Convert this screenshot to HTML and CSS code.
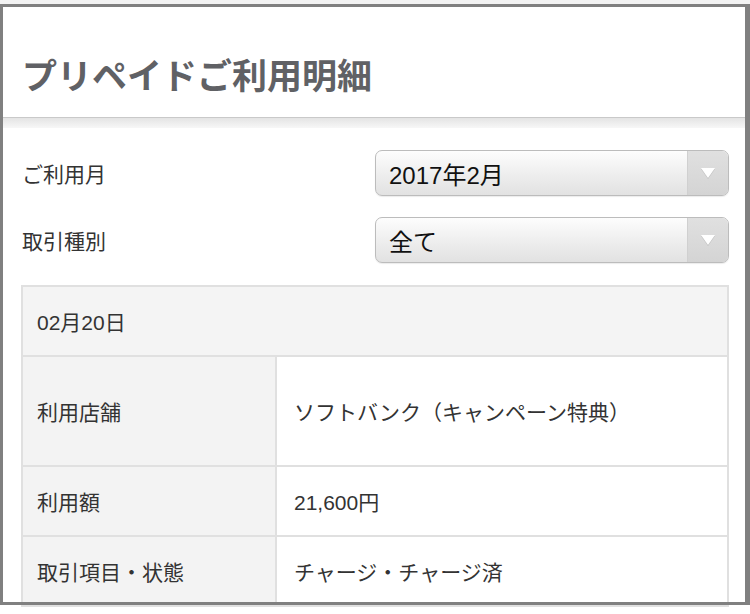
FILE: index.html
```html
<!DOCTYPE html>
<html lang="ja">
<head>
  <meta charset="UTF-8">
  <title>プリペイドご利用明細</title>
  <meta name="viewport" content="width=device-width, initial-scale=1.0">
  <link rel="stylesheet" href="styles.css">
</head>
<body>
  <div class="top-strip"></div>
  <div class="page-header">
    <h1 class="page-title">プリペイドご利用明細</h1>
  </div>
  <div class="header-rule"></div>

  <div class="filters">
    <div class="filter-row">
      <div class="filter-label">ご利用月</div>
      <div class="select-box">
        <span class="select-value">2017年2月</span>
        <span class="select-arrow"><span class="arrow-tri"></span></span>
      </div>
    </div>
    <div class="filter-row">
      <div class="filter-label">取引種別</div>
      <div class="select-box">
        <span class="select-value">全て</span>
        <span class="select-arrow"><span class="arrow-tri"></span></span>
      </div>
    </div>
  </div>

  <table class="detail-table">
    <colgroup>
      <col class="col-label">
      <col class="col-value">
    </colgroup>
    <tr class="date-row">
      <td colspan="2">02月20日</td>
    </tr>
    <tr class="tall-row">
      <th>利用店舗</th>
      <td>ソフトバンク（キャンペーン特典）</td>
    </tr>
    <tr>
      <th>利用額</th>
      <td>21,600円</td>
    </tr>
    <tr>
      <th>取引項目・状態</th>
      <td>チャージ・チャージ済</td>
    </tr>
  </table>

  <!-- outline drawn round the captured area -->
  <div class="capture-frame"></div>
</body>
</html>
```

FILE: styles.css
```css
body {
  margin: 0;
  padding: 0;
  background: #fff;
  font-family: 'Liberation Sans', 'Noto Sans CJK JP', sans-serif;
  color: #333;
  overflow: hidden;
}
.top-strip {
  height: 4px;
  background: #f3f3f3;
}
.page-header {
  padding: 52px 22px 19px 22px;
}
.page-title {
  margin: 0;
  font-size: 35px;
  line-height: 42px;
  font-weight: 600;
  color: #606165;
  letter-spacing: 0;
}
.header-rule {
  height: 10px;
  border-top: 1px solid #c9c9c9;
  background: linear-gradient(#e4e4e4, #f7f7f7);
}
.filters {
  padding: 22px 21px 0 22px;
}
.filter-row {
  display: flex;
  align-items: center;
  margin-bottom: 21px;
}
.filter-row:last-child {
  margin-bottom: 22px;
}
.filter-label {
  flex: 1;
  font-size: 21px;
  color: #333;
}
.select-box {
  width: 354px;
  height: 46px;
  box-sizing: border-box;
  border: 1px solid #bcbcbc;
  border-radius: 7px;
  background: linear-gradient(#fdfdfd, #ececec 60%, #e2e2e2);
  box-shadow: 0 1px 1px rgba(0,0,0,0.08);
  display: flex;
  align-items: center;
  overflow: hidden;
}
.select-value {
  flex: 1;
  padding-left: 13px;
  font-size: 24px;
  color: #111;
}
.select-arrow {
  width: 40px;
  height: 100%;
  background: linear-gradient(#e0e0e0, #d4d4d4);
  border-left: 1px solid #d0d0d0;
  display: flex;
  align-items: center;
  justify-content: center;
}
.arrow-tri {
  width: 0;
  height: 0;
  border-left: 7px solid transparent;
  border-right: 7px solid transparent;
  border-top: 10px solid #fff;
  filter: drop-shadow(0 1px 0 rgba(0,0,0,0.12));
}
.detail-table {
  width: 708px;
  margin: 0 21px;
  border-collapse: collapse;
  border: 2px solid #e0e0e0;
  table-layout: fixed;
}
.col-label {
  width: 254px;
}
.detail-table th,
.detail-table td {
  height: 68px;
  padding: 0 14px;
  font-size: 21px;
  font-weight: normal;
  text-align: left;
  color: #333;
  border: 2px solid #e0e0e0;
}
.detail-table th {
  background: #f3f3f3;
}
.detail-table td {
  background: #fff;
  padding-left: 17px;
}
.detail-table .date-row td {
  background: #f4f4f4;
  padding-left: 14px;
}
.detail-table .tall-row th,
.detail-table .tall-row td {
  height: 108px;
}
.capture-frame {
  position: absolute;
  top: 4px;
  left: 0;
  width: 750px;
  height: 601px;
  box-sizing: border-box;
  border: 3px solid #808080;
  border-right-width: 5px;
  pointer-events: none;
}
```
